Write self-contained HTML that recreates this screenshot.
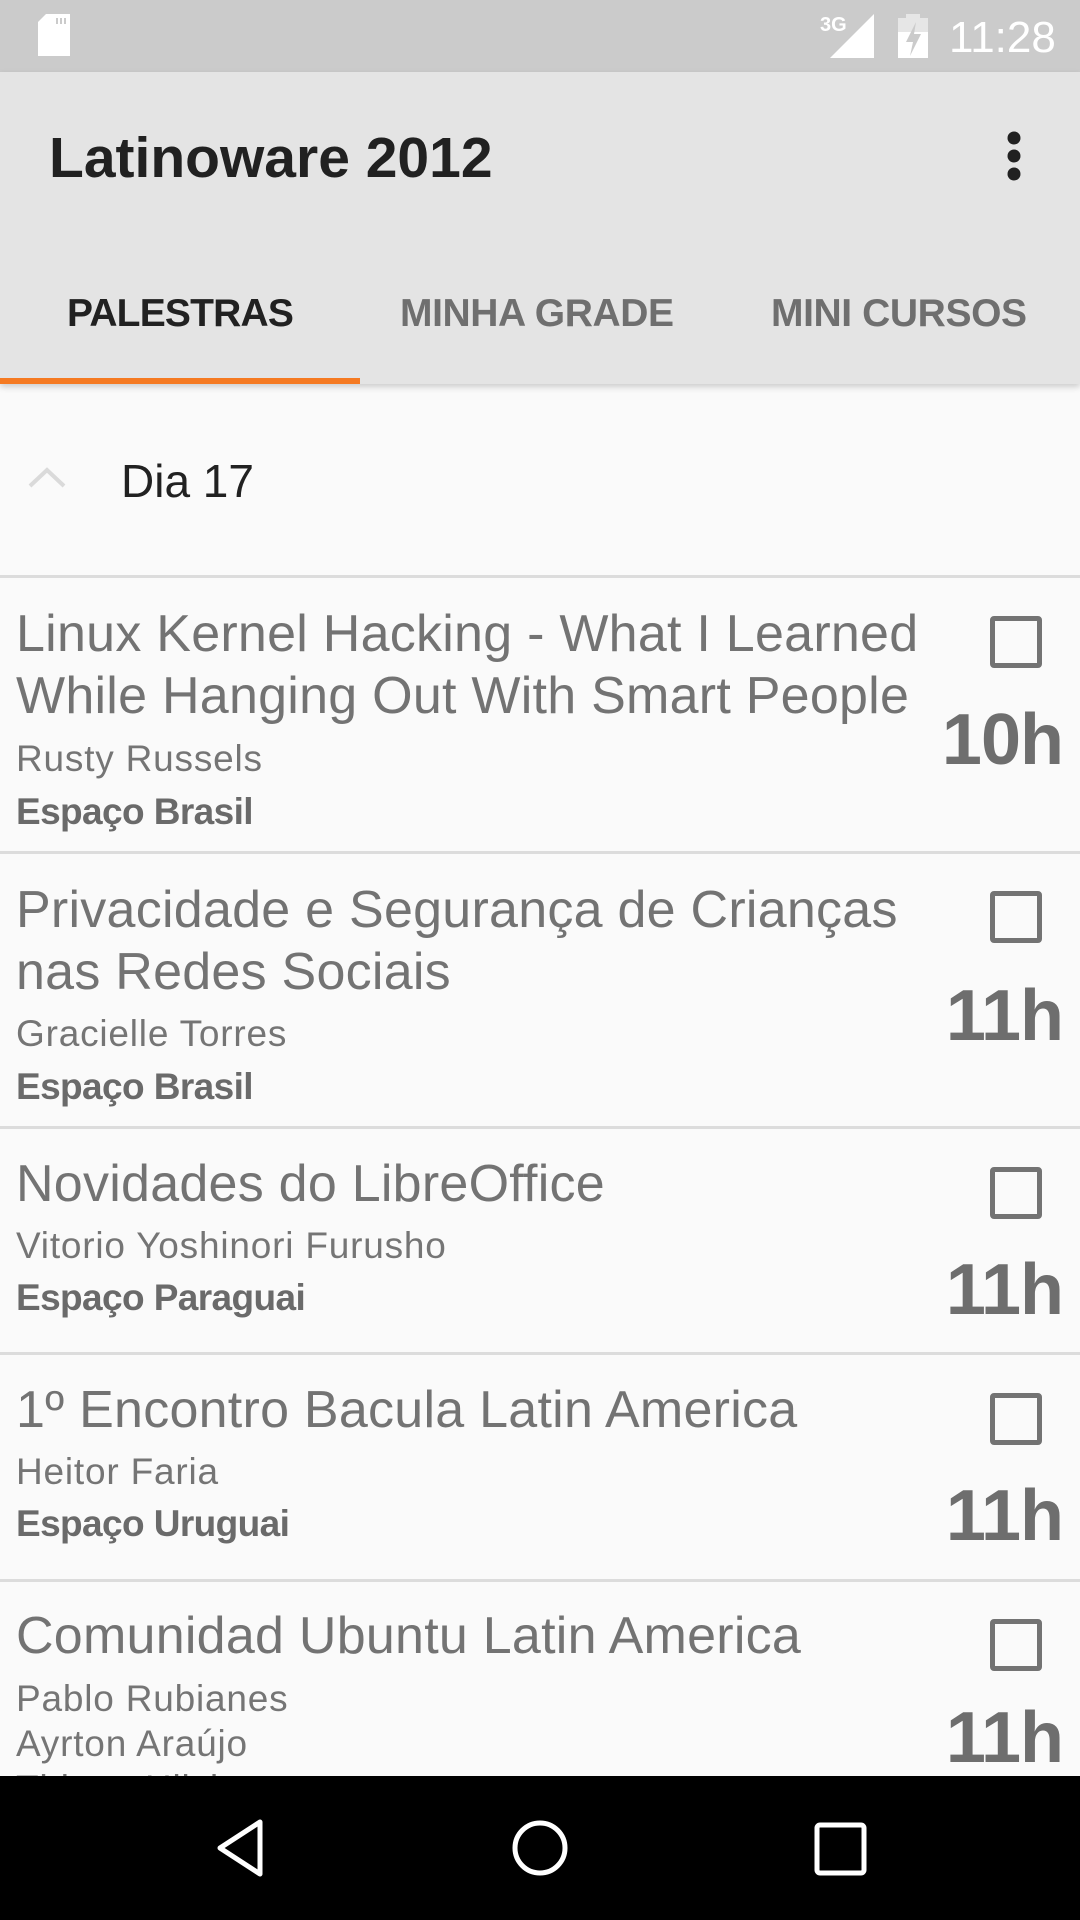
<!DOCTYPE html>
<html><head><meta charset="utf-8"><style>
*{margin:0;padding:0;box-sizing:border-box}
body{width:1080px;height:1920px;overflow:hidden;background:#fafafa;font-family:"Liberation Sans",sans-serif;position:relative}
.a{position:absolute;white-space:nowrap}
.sb{position:absolute;left:0;top:0;width:1080px;height:72px;background:#cbcbcb}
.ab{position:absolute;left:0;top:72px;width:1080px;height:312px;background:#e4e4e4;box-shadow:0 3px 6px rgba(0,0,0,.18)}
.div{position:absolute;left:0;width:1080px;height:3px;background:#dcdcdc}
.t{font-size:52px;line-height:62px;color:#737373;letter-spacing:0.25px;left:16px}
.s{font-size:37px;line-height:37px;color:#757575;left:16px;letter-spacing:0.8px}
.l{font-size:37px;line-height:37px;color:#6a6a6a;font-weight:bold;left:16px;letter-spacing:-0.6px}
.h{font-size:72px;line-height:72px;color:#6e6e6e;font-weight:bold;right:17px;letter-spacing:-1px}
.cb{position:absolute;left:990px;width:52px;height:52px;border:5px solid #737373;border-radius:4px}
</style></head><body>
<div class="sb"></div>
<svg class="a" style="left:36px;top:14px" width="36" height="42" viewBox="0 0 36 42"><path d="M10 0H34V42H2V8Z" fill="#fff"/><rect x="20" y="4" width="2" height="6" fill="#cbcbcb"/><rect x="24" y="4" width="2" height="6" fill="#cbcbcb"/><rect x="28" y="4" width="2" height="6" fill="#cbcbcb"/></svg>
<div class="a" style="left:820px;top:14px;font-size:20px;font-weight:bold;color:#fff">3G</div>
<svg class="a" style="left:830px;top:14px" width="45" height="45"><path d="M0 44L44 0V44Z" fill="#fff"/></svg>
<svg class="a" style="left:898px;top:14px" width="30" height="44"><rect x="8" y="0" width="14" height="5" fill="#e6e6e6"/><rect x="0" y="4" width="30" height="40" fill="#fff"/><rect x="0" y="4" width="30" height="14" fill="#e6e6e6"/><path d="M18 8L8 28H15L12 42L23 20H16Z" fill="#cbcbcb"/></svg>
<div class="a" style="left:949px;top:13px;font-size:44px;line-height:50px;color:#fff">11:28</div>
<div class="ab"></div>
<div class="a" style="left:49px;top:128px;font-size:57px;line-height:60px;color:#212121;font-weight:bold;letter-spacing:0px">Latinoware 2012</div>
<svg class="a" style="left:1004px;top:130px" width="20" height="52"><circle cx="10" cy="8" r="6.5" fill="#212121"/><circle cx="10" cy="26" r="6.5" fill="#212121"/><circle cx="10" cy="44" r="6.5" fill="#212121"/></svg>
<div class="a" style="left:67px;top:294px;font-size:39px;line-height:40px;color:#212121;font-weight:bold;letter-spacing:-0.8px">PALESTRAS</div>
<div class="a" style="left:400px;top:294px;font-size:39px;line-height:40px;color:#6f6f6f;font-weight:bold;letter-spacing:-0.4px">MINHA GRADE</div>
<div class="a" style="left:771px;top:294px;font-size:39px;line-height:40px;color:#6f6f6f;font-weight:bold;letter-spacing:-0.4px">MINI CURSOS</div>
<div class="a" style="left:0;top:378px;width:360px;height:6px;background:#f57a22"></div>
<svg class="a" style="left:28px;top:466px" width="38" height="24"><path d="M2 20L19 4L36 20" stroke="#dadada" stroke-width="4" fill="none"/></svg>
<div class="a" style="left:121px;top:458px;font-size:46px;line-height:46px;color:#212121">Dia 17</div>
<div class="div" style="top:575px"></div>

<div class="a t" style="top:603px">Linux Kernel Hacking - What I Learned</div>
<div class="a t" style="top:665px">While Hanging Out With Smart People</div>
<div class="a s" style="top:740px">Rusty Russels</div>
<div class="a l" style="top:793px">Espaço Brasil</div>
<div class="cb" style="top:616px"></div>
<div class="a h" style="top:704px">10h</div>
<div class="div" style="top:851px"></div>

<div class="a t" style="top:879px">Privacidade e Segurança de Crianças</div>
<div class="a t" style="top:941px">nas Redes Sociais</div>
<div class="a s" style="top:1015px">Gracielle Torres</div>
<div class="a l" style="top:1068px">Espaço Brasil</div>
<div class="cb" style="top:891px"></div>
<div class="a h" style="top:980px">11h</div>
<div class="div" style="top:1126px"></div>

<div class="a t" style="top:1153px">Novidades do LibreOffice</div>
<div class="a s" style="top:1227px">Vitorio Yoshinori Furusho</div>
<div class="a l" style="top:1279px">Espaço Paraguai</div>
<div class="cb" style="top:1167px"></div>
<div class="a h" style="top:1254px">11h</div>
<div class="div" style="top:1352px"></div>

<div class="a t" style="top:1379px">1º Encontro Bacula Latin America</div>
<div class="a s" style="top:1453px">Heitor Faria</div>
<div class="a l" style="top:1505px">Espaço Uruguai</div>
<div class="cb" style="top:1393px"></div>
<div class="a h" style="top:1480px">11h</div>
<div class="div" style="top:1579px"></div>

<div class="a t" style="top:1605px">Comunidad Ubuntu Latin America</div>
<div class="a s" style="top:1680px">Pablo Rubianes</div>
<div class="a s" style="top:1725px">Ayrton Araújo</div>
<div class="a s" style="top:1770px">Thiago Hilshorst</div>
<div class="cb" style="top:1619px"></div>
<div class="a h" style="top:1702px">11h</div>

<div class="a" style="left:0;top:1776px;width:1080px;height:144px;background:#000"></div>
<svg class="a" style="left:0;top:1776px" width="1080" height="144"><path d="M260 46L220 72L260 98Z" stroke="#fff" stroke-width="5" fill="none" stroke-linejoin="round"/><circle cx="540" cy="72" r="25" stroke="#fff" stroke-width="5" fill="none"/><rect x="817" y="49" width="47" height="48" rx="3" stroke="#fff" stroke-width="5" fill="none"/></svg>
</body></html>
